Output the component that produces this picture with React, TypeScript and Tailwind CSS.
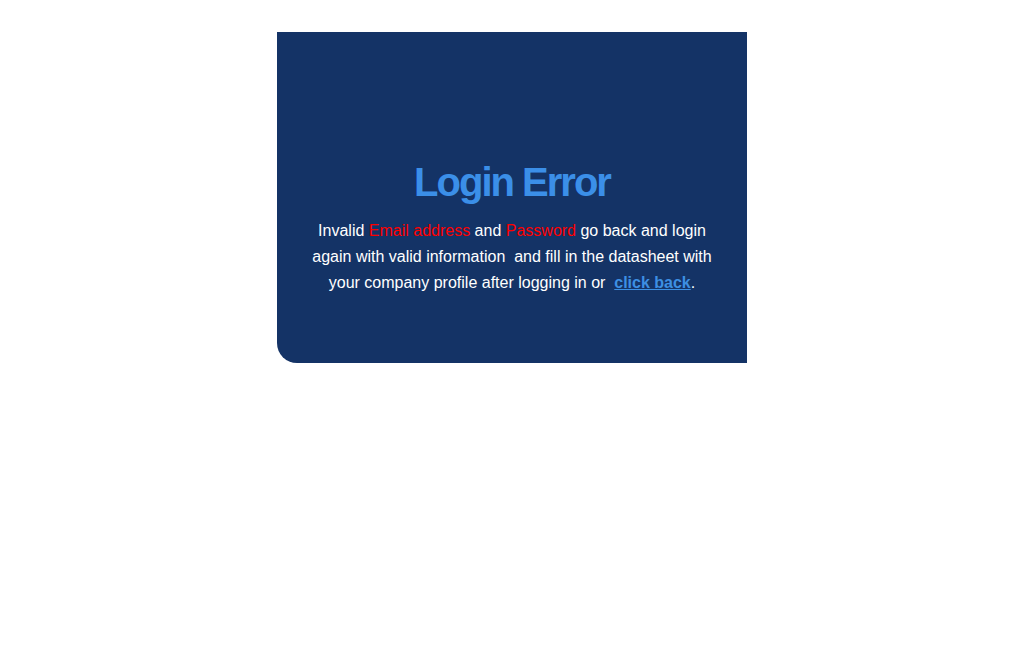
export default function App() {
  return (
    <div className="min-h-[652px] bg-white pt-8 font-['Liberation_Sans',Arial,sans-serif]">
      <div className="mx-auto w-[470px] h-[331px] rounded-bl-[20px] bg-[#143366] px-[35px] pt-[126px] text-center">
        <h1 className="text-[40px] leading-[48px] font-bold tracking-[-2px] text-[#3b8fe8]">
          Login Error
        </h1>
        <p className="mt-[12px] text-base leading-[26px] text-white">
          Invalid <span className="text-[#ff0000]">Email address</span> and{" "}
          <span className="text-[#ff0000]">Password</span> go back and login again with valid
          information{"\u00a0"} and fill in the datasheet with your company profile after logging
          in or{"\u00a0"}{" "}
          <a href="#" className="font-bold text-[#3d8fe3] underline">
            click back
          </a>
          .
        </p>
      </div>
    </div>
  );
}
